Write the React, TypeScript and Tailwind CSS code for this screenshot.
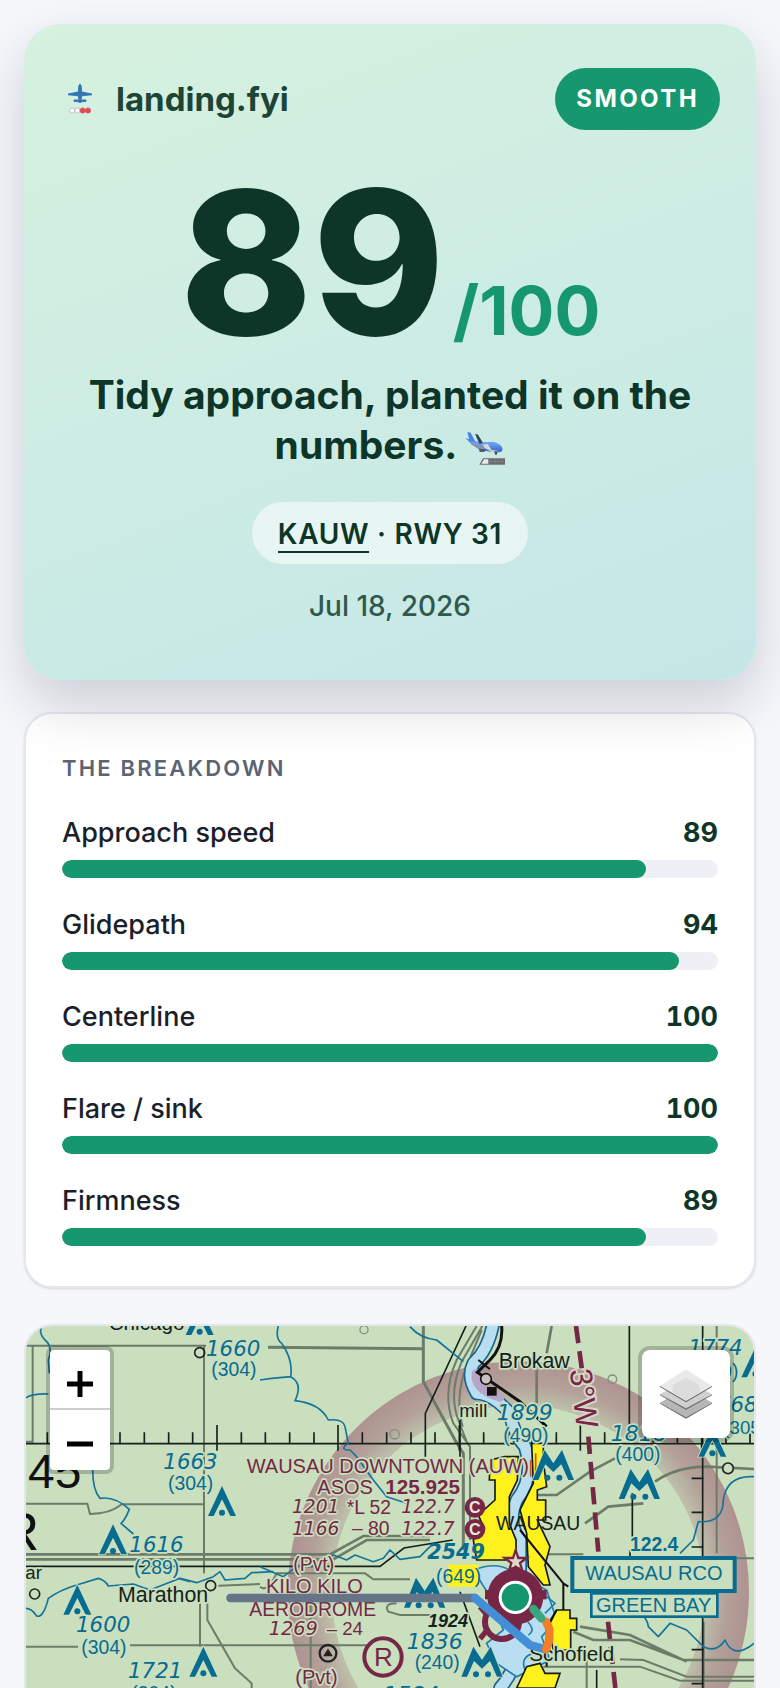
import React, { useState } from 'react';

interface Metric {
  label: string;
  score: number;
}

const metrics: Metric[] = [
  { label: 'Approach speed', score: 89 },
  { label: 'Glidepath', score: 94 },
  { label: 'Centerline', score: 100 },
  { label: 'Flare / sink', score: 100 },
  { label: 'Firmness', score: 89 },
];

const LogoMark: React.FC = () => (
  <svg viewBox="0 0 40 40" className="w-10 h-10 shrink-0" aria-hidden="true">
    <g fill="#3576b5">
      <path d="M18.200 7.500Q20 2 21.800 7.500L22 12.500L32 14.500V16.300L22 17.200L21.200 24H18.800L18 17.200L8 16.300V14.500L18 12.500Z" />
      <rect x="13.500" y="20.500" width="13" height="2.400" rx="1" />
    </g>
    <g strokeWidth="0.8">
      <circle cx="12.200" cy="31.500" r="2.600" fill="#fff" stroke="#aab3bb" />
      <circle cx="17.400" cy="31.500" r="2.600" fill="#fff" stroke="#aab3bb" />
      <circle cx="22.700" cy="31.500" r="2.600" fill="#e5484d" stroke="#d2565c" />
      <circle cx="28" cy="31.500" r="2.600" fill="#e5484d" stroke="#d2565c" />
    </g>
  </svg>
);

const ArrivalPlane: React.FC = () => (
  <svg viewBox="0 0 120 102" className="inline-block w-10 h-[34px] align-[-7px]" role="img" aria-label="airplane arrival">
    <defs>
      <linearGradient id="fuselage" x1="0" y1="0" x2="0" y2="1">
        <stop offset="0" stopColor="#4a82ea" />
        <stop offset="0.400" stopColor="#6da0f5" />
        <stop offset="1" stopColor="#2f5fc4" />
      </linearGradient>
    </defs>
    <path d="M1 18L20 24L44 31L84 30Q107 34 112 48Q115 58 103 61L80 60L44 53L18 36Z" fill="url(#fuselage)" />
    <path d="M7 0L17 2L30 27L14 28Z" fill="#4a82ea" />
    <path d="M30 5L39 8L54 33L43 35Z" fill="#354250" />
    <path d="M18 31L42 40L62 46L54 53L38 49L18 37Z" fill="#8298ad" />
    <path d="M52 38L68 36L80 54L62 50Z" fill="#d3dcd6" />
    <path d="M64 50L84 54L102 57L96 61L78 60Z" fill="#c3cfd3" />
    <path d="M42 50L60 52L60 59L44 60Z" fill="#53565f" />
    <path d="M88 58H99L95 68H90Z" fill="#4b5158" />
    <path d="M54 79H120V98H43Z" fill="#6c6c70" />
    <path d="M57 82H70V95H49Z" fill="#e8eaea" />
    <path d="M75 88H116" stroke="#929295" strokeWidth="3" strokeDasharray="7 4" />
  </svg>
);

const LayersIcon: React.FC = () => (
  <svg viewBox="0 0 156 150" className="w-[52px] h-[50px]" aria-hidden="true">
    <path d="M0 101L78 55L156 101L78 149Z" fill="#b6b6b6" />
    <path d="M0 101L78 145L156 101V104L78 149L0 104Z" fill="#777" />
    <path d="M0 76L78 30L156 76L78 122Z" fill="#d0d0d0" />
    <path d="M0 76L78 118L156 76V79L78 123L0 79Z" fill="#777" />
    <path d="M0 51L78 1L156 51L78 99Z" fill="#e9e9e9" />
    <path d="M38 49L78 26L119 49L119 69L78 93L38 69Z" fill="#dcdcdc" />
    <path d="M0 51L78 96L156 51V54L78 100L0 54Z" fill="#666" />
  </svg>
);

const BLUE = '#086b90';
const MAGENTA = '#772746';

interface LabelProps {
  x: number;
  y: number;
  size: number;
  fill: string;
  italic?: boolean;
  bold?: boolean;
  children: string;
}

// Elevations and frequencies are set in the wider oblique face
const Label: React.FC<LabelProps> = ({ x, y, size, fill, italic, bold, children }) => (
  <text
    x={x}
    y={y}
    fontSize={size}
    fill={fill}
    fontFamily={italic && !bold ? '"DejaVu Sans", sans-serif' : undefined}
    fontStyle={italic ? 'italic' : 'normal'}
    fontWeight={bold ? 700 : 400}
    stroke="#c9dfbe"
    strokeWidth="10"
    strokeLinejoin="round"
    paintOrder="stroke"
  >
    {children}
  </text>
);

// Obstruction symbol, (x, y) is the tip
const Tower: React.FC<{ x: number; y: number }> = ({ x, y }) => (
  <g transform={`translate(${x} ${y})`}>
    <path d="M0 0L-42 90H-25L0 40L25 90H42Z" fill={BLUE} stroke="#c9dfbe" strokeWidth="5" paintOrder="stroke" />
    <circle cx="0" cy="80" r="9" fill={BLUE} />
  </g>
);

const TowerGroup: React.FC<{ x: number; y: number }> = ({ x, y }) => (
  <g transform={`translate(${x} ${y})`}>
    <path d="M-26 0L-62 90H-45L-24 43L0 66L24 43L45 90H62L26 0L0 40Z" fill={BLUE} stroke="#c9dfbe" strokeWidth="5" paintOrder="stroke" />
    <circle cx="-18" cy="83" r="9" fill={BLUE} />
    <circle cx="18" cy="83" r="9" fill={BLUE} />
  </g>
);

const ticks = Array.from({ length: 30 }, (_, i) => 142 + Math.round(i * 72.7));

const SectionalChart: React.FC = () => (
  <svg
    viewBox="78 48 2184 1086"
    preserveAspectRatio="xMidYMin slice"
    className="absolute inset-0 w-full h-full"
    fontFamily='"Liberation Sans", Arial, sans-serif'
    role="img"
    aria-label="Sectional chart around Wausau Downtown"
  >
    <defs>
      <radialGradient id="airspace" gradientUnits="userSpaceOnUse" cx="1555" cy="846" r="692">
        <stop offset="0.820" stopColor="#98526a" stopOpacity="0.240" />
        <stop offset="0.900" stopColor="#98526a" stopOpacity="0.440" />
        <stop offset="1" stopColor="#98526a" stopOpacity="0.540" />
      </radialGradient>
    </defs>
    <rect x="0" y="0" width="2400" height="1400" fill="#c9dfbe" />
    <circle cx="1555" cy="846" r="626" fill="none" stroke="url(#airspace)" strokeWidth="132" />

    {/* roads */}
    <g fill="none" stroke="#6c7c69" strokeWidth="6">
      <path d="M78 107H618M98 107V395H78M612 107V730L612 790M78 581H262L270 612Q330 612 365 583H612" />
      <path d="M78 733H990L1090 678H1290M78 748H1000L1100 690H1290" strokeWidth="8" />
      <path d="M78 1010H234M390 1006H1195M600 880V1010M622 880V930L705 1075L755 1120V1134M655 827L780 822" />
      <path d="M804 112L1270 116M1270 48V215L1365 390L1390 430V720" strokeWidth="9" />
      <path d="M1430 48L1370 150Q1325 250 1360 340L1410 410V690M1447 48L1385 155Q1345 250 1375 330L1402 400" />
      <path d="M1445 60L1395 180Q1365 270 1388 350" />
      <path d="M780 830Q800 850 830 790H1095L1120 808H1230M932 880V1134M1190 880Q1150 880 1165 905L1200 915H1300" />
      <path d="M1655 48L1640 130M1610 180V280M1612 555H1670L1770 485L1845 445M1755 640L1825 590L1930 580M1965 515Q2030 470 2120 470L2262 477" strokeWidth="8" />
      <path d="M2150 48V730M1630 733H1750M2210 745H2262M1860 1048L1930 1050L2060 1100H2262M1630 1070H1920L2040 1112H2262M1760 1048V1134" />
      <path d="M1720 965L1780 990H1890L2050 1050H2262M1740 950L1890 975L2060 1055" strokeWidth="8" />
      <path d="M2110 935V1134" strokeWidth="8" />
    </g>

    {/* rail lines and graticule */}
    <g fill="none" stroke="#17201c" strokeWidth="5">
      <path d="M78 401H2262M78 769H1140L1212 714L1358 690M1398 48L1276 310V440M1380 330V440M1888 48V400M2108 48V1134" />
      <path d="M1897 550V680M1380 845L1440 1010M1890 720V820M1790 1080V1134" />
      <path d="M2075 505H2110M2075 607H2110M2075 711H2110M2075 1019H2110M2075 1121H2110" />
      {ticks.map((x, i) => (
        <path key={x} d={i % 5 === 2 ? `M${x} 345V422` : `M${x} 367V401`} />
      ))}
    </g>

    {/* streams */}
    <g fill="none" stroke="#15749a" strokeWidth="5" strokeLinejoin="round">
      <path d="M125 48Q115 70 135 90Q160 110 145 150L148 190M78 263Q100 250 145 252M278 480Q278 540 300 565Q345 558 388 598Q375 630 363 640L400 672" />
      <path d="M78 895Q95 895 110 918Q130 925 145 865Q180 840 230 825L295 805Q315 810 325 828L400 822L450 840L540 805L590 818L640 800L660 785L675 810L735 805L755 788L820 785" />
      <path d="M835 48Q825 85 845 100Q880 150 872 200L815 205L780 210M872 200Q910 220 885 272Q960 280 985 330Q1030 325 1035 350L1045 400Q1015 420 1050 420L1070 440L1120 510L1160 560L1220 580" />
      <path d="M980 745L1000 735L1040 750L1065 735L1120 755L1150 745L1170 720L1200 748L1260 740L1290 710M780 770L850 800L890 770L960 768" />
      <path d="M2262 500Q2180 495 2170 570Q2170 640 2095 635L2080 690L2040 730M1900 915Q1940 910 1945 950L1975 980L2010 940L2060 960L2110 1010Q2150 1030 2175 990Q2200 1050 2262 1000" />
      <path d="M1230 50Q1260 85 1310 90L1390 155M535 805L570 815" />
    </g>

    {/* river and lakes */}
    <g fill="none" strokeLinejoin="round" strokeLinecap="round">
      <path d="M1483 20Q1470 115 1420 160Q1400 200 1430 250Q1475 250 1530 310Q1540 370 1575 410Q1605 500 1550 570Q1520 640 1560 690V780L1545 900Q1580 970 1540 1020Q1550 1080 1500 1134" stroke="#16638b" strokeWidth="42" />
      <path d="M1483 20Q1470 115 1420 160Q1400 200 1430 250Q1475 250 1530 310Q1540 370 1575 410Q1605 500 1550 570Q1520 640 1560 690V780L1545 900Q1580 970 1540 1020Q1550 1080 1500 1134" stroke="#b9ddf1" strokeWidth="32" />
      <path d="M1428 190Q1422 240 1500 262" stroke="#b5a5c7" strokeWidth="26" />
    </g>
    <path d="M1420 780Q1500 750 1540 790L1640 840L1670 930L1625 980L1650 1050L1550 1100L1490 1060L1460 1000L1510 960L1470 860Z" fill="#b9ddf1" stroke="#207da5" strokeWidth="5" />
    <path d="M1578 930Q1610 960 1585 975M1640 860L1665 880L1635 910M1600 1030Q1560 1040 1575 1080" fill="none" stroke="#207da5" strokeWidth="5" />

    {/* built-up areas */}
    <g fill="#fff21c" stroke="#161b16" strokeWidth="5">
      <path d="M1470 450L1515 440H1555L1552 510L1528 560V640L1548 690V750H1430L1420 690L1450 650L1435 615L1485 570V510H1468Z" />
      <path d="M1595 400H1630V455L1640 530L1612 540V570H1637V630H1612L1650 710L1635 765L1650 825H1630L1585 770L1580 670L1560 600L1600 520Z" />
      <path d="M1670 900H1710V925H1730V960H1712V1020H1660L1645 950Z" />
      <path d="M1550 1134L1580 1070L1620 1060L1635 1090H1680L1665 1134Z" />
    </g>
    <path d="M1607 430V510M1592 450V500" stroke="#d34c34" strokeWidth="5" />
    <g fill="none" stroke="#111" strokeWidth="9">
      <path d="M1505 48Q1510 110 1470 150L1432 187L1560 275L1640 350" />
      <path d="M1560 660L1690 820V900M1670 900L1640 950V1070M1690 820L1705 830M1435 150L1470 178" strokeWidth="6" />
    </g>
    <circle cx="1458" cy="207" r="16" fill="#c9c2bf" stroke="#111" strokeWidth="5" />
    <rect x="1461" y="231" width="29" height="26" fill="#111" />

    {/* isogonic line */}
    <path d="M1728 48L1746 180M1765 380L1795 725M1824 935L1846 1134" stroke={MAGENTA} strokeWidth="14" strokeDasharray="52 24" fill="none" />
    <text x="0" y="0" fontSize="94" fill={MAGENTA} stroke="#d6d6c8" strokeWidth="12" paintOrder="stroke" transform="translate(1709 180) rotate(83)">3°W</text>

    <g fill="none" stroke="#222" strokeWidth="5">
      <circle cx="599" cy="128" r="15" />
      <circle cx="632" cy="827" r="15" fill="#c9dfbe" />
      <circle cx="104" cy="852" r="15" />
      <circle cx="2184" cy="475" r="16" fill="#c9dfbe" />
      <circle cx="984" cy="1030" r="25" strokeWidth="7" />
      <path d="M974 1036L984 1020L994 1036Z" fill="#222" />
    </g>
    <g fill="none" stroke="#858e7e" strokeWidth="4">
      <circle cx="1092" cy="59" r="12" />
      <circle cx="1184" cy="373" r="14" />
      <circle cx="1837" cy="208" r="13" />
    </g>

    <Tower x={599} y={-15} />
    <Tower x={666} y={528} />
    <Tower x={339} y={643} />
    <Tower x={232} y={824} />
    <Tower x={610} y={1010} />
    <Tower x={2137} y={350} />
    <Tower x={2266} y={112} />
    <TowerGroup x={1660} y={420} />
    <TowerGroup x={1918} y={477} />
    <TowerGroup x={1274} y={803} />
    <TowerGroup x={1446} y={1010} />

    <g>
      <Label x={326} y={61} size={62} fill="#15211c">Chicago</Label>
      <Label x={618} y={138} size={64} fill={BLUE} italic>1660</Label>
      <Label x={634} y={198} size={58} fill={BLUE}>(304)</Label>
      <Label x={490} y={478} size={64} fill={BLUE} italic>1663</Label>
      <Label x={504} y={540} size={58} fill={BLUE}>(304)</Label>
      <Label x={388} y={725} size={64} fill={BLUE} italic>1616</Label>
      <Label x={402} y={791} size={58} fill={BLUE}>(289)</Label>
      <Label x={228} y={965} size={64} fill={BLUE} italic>1600</Label>
      <Label x={244} y={1031} size={58} fill={BLUE}>(304)</Label>
      <Label x={384} y={1105} size={64} fill={BLUE} italic>1721</Label>
      <Label x={394} y={1170} size={58} fill={BLUE}>(304)</Label>
      <text x="84" y="535" fontSize="144" fill="#111">45</text>
      <text x="2" y="720" fontSize="160" fill="#111">R</text>
      <Label x={76} y={808} size={56} fill="#15211c">ar</Label>
      <Label x={354} y={876} size={64} fill="#15211c">Marathon</Label>

      <Label x={740} y={490} size={60} fill={MAGENTA}>WAUSAU DOWNTOWN (AUW)</Label>
      <Label x={952} y={553} size={60} fill={MAGENTA}>ASOS</Label>
      <Label x={1156} y={553} size={62} fill={MAGENTA} bold>125.925</Label>
      <Label x={876} y={610} size={56} fill={MAGENTA} italic>1201</Label>
      <Label x={1040} y={612} size={58} fill={MAGENTA}>*L 52</Label>
      <Label x={1204} y={610} size={56} fill={MAGENTA} italic>122.7</Label>
      <Label x={876} y={676} size={56} fill={MAGENTA} italic>1166</Label>
      <Label x={1056} y={676} size={58} fill={MAGENTA}>– 80</Label>
      <Label x={1204} y={676} size={56} fill={MAGENTA} italic>122.7</Label>
      <Label x={880} y={782} size={58} fill={MAGENTA}>(Pvt)</Label>
      <Label x={798} y={850} size={60} fill={MAGENTA}>KILO KILO</Label>
      <Label x={748} y={917} size={58} fill={MAGENTA}>AERODROME</Label>
      <Label x={806} y={974} size={58} fill={MAGENTA} italic>1269</Label>
      <Label x={980} y={974} size={56} fill={MAGENTA}>– 24</Label>
      <Label x={886} y={1122} size={60} fill={MAGENTA}>(Pvt)</Label>
      <Label x={1378} y={322} size={56} fill="#15211c">mill</Label>
      <Label x={1496} y={174} size={64} fill="#15211c">Brokaw</Label>
      <Label x={1490} y={331} size={66} fill={BLUE} italic>1899</Label>
      <Label x={1510} y={396} size={58} fill={BLUE}>(490)</Label>
      <text x="1282" y="748" fontSize="62" fontFamily='"DejaVu Sans", sans-serif' fontStyle="italic" fontWeight="700" fill={BLUE}>2549</text>
      <rect x="1345" y="764" width="90" height="66" fill="#fff21c" />
      <text x="1308" y="818" fontSize="58" fill={BLUE}>(649)</text>
      <Label x={1284} y={952} size={54} fill="#15211c" italic bold>1924</Label>
      <Label x={1220} y={1016} size={66} fill={BLUE} italic>1836</Label>
      <Label x={1244} y={1078} size={58} fill={BLUE}>(240)</Label>
      <Label x={1150} y={1176} size={66} fill={BLUE} italic>1584</Label>

      <text x="1488" y="661" fontSize="58" fill="#15211c">WAUSAU</text>
      <Label x={2065} y={136} size={64} fill={BLUE} italic>1774</Label>
      <Label x={2080} y={204} size={58} fill={BLUE}>(319)</Label>
      <Label x={2110} y={306} size={64} fill={BLUE} italic>1768</Label>
      <Label x={2170} y={372} size={56} fill={BLUE}>(305)</Label>
      <Label x={1832} y={394} size={66} fill={BLUE} italic>1818</Label>
      <Label x={1846} y={454} size={58} fill={BLUE}>(400)</Label>
      <Label x={1890} y={724} size={58} fill={BLUE} bold>122.4</Label>
      <Label x={1588} y={1054} size={62} fill="#15211c">Schofield</Label>
    </g>

    <circle cx="1149" cy="1041" r="56" fill="#c9dfbe" stroke={MAGENTA} strokeWidth="12" />
    <text x="1122" y="1069" fontSize="78" fill={MAGENTA}>R</text>
    <g fontSize="48" fontWeight="700" fill="#e8e7d7">
      <circle cx="1425" cy="592" r="31" fill={MAGENTA} />
      <text x="1407" y="609">C</text>
      <circle cx="1425" cy="658" r="31" fill={MAGENTA} />
      <text x="1407" y="675">C</text>
    </g>

    <g fill="#c9dfbe" stroke={BLUE} strokeWidth="12">
      <rect x="1774" y="850" width="378" height="70" strokeWidth="8" />
      <rect x="1717" y="744" width="487" height="99" />
    </g>
    <g fontSize="60" fill={BLUE}>
      <text x="1756" y="809">WAUSAU</text>
      <text x="2034" y="809">RCO</text>
      <text x="1788" y="905">GREEN BAY</text>
    </g>

    {/* airport symbols */}
    <path d="M1547 720L1555 744H1580L1560 759L1568 785L1547 770L1526 785L1534 759L1514 744H1539Z" fill="#e2d6cb" stroke={MAGENTA} strokeWidth="7" />
    <g fill={MAGENTA}>
      <rect x="1455" y="840" width="185" height="28" />
      <rect x="1530" y="772" width="30" height="180" />
      <circle cx="1546" cy="860" r="84" />
    </g>
    <circle cx="1506" cy="936" r="51" fill="none" stroke={MAGENTA} strokeWidth="18" />
    <path d="M1440 986L1466 955M1440 890L1466 920" stroke={MAGENTA} strokeWidth="16" />

    {/* flown track */}
    <g fill="none" strokeWidth="25" strokeLinecap="round" strokeLinejoin="round">
      <path d="M691 864H1425" stroke="#667487" />
      <path d="M1425 864L1590 1005L1635 1018" stroke="#438fd7" />
      <path d="M1638 1018L1648 990V956L1638 935" stroke="#ef7f29" />
      <path d="M1624 925L1600 897" stroke="#3aa680" />
    </g>
    <circle cx="1546" cy="862" r="50" fill="#fff" />
    <circle cx="1546" cy="862" r="41" fill="#15966d" />
  </svg>
);

const ScoreBar: React.FC<Metric> = ({ label, score }) => (
  <div>
    <div className="flex justify-between items-baseline leading-9 mb-[9px]">
      <span className="text-[27px] font-medium text-[#1b1f2a]">{label}</span>
      <span className="text-[27px] font-bold tabular-nums text-[#0d3528]">{score}</span>
    </div>
    <div className="h-[18px] rounded-full bg-[#eef0f6] overflow-hidden">
      <div className="h-full rounded-full bg-[#16976e]" style={{ width: `${score}%` }} />
    </div>
  </div>
);

const App: React.FC = () => {
  const [zoom, setZoom] = useState(10);

  return (
    <main className="min-h-screen flex flex-col bg-[#f5f7fb] px-6 pt-6 font-['Inter',sans-serif]">
      <section className="relative z-10 rounded-[36px] bg-linear-160 from-[#d6f1de] via-[#cdece4] to-[#c4e7e6] px-9 pt-11 pb-14 text-center text-[#0d3528] shadow-[0_24px_56px_rgba(20,24,48,0.18)]">
        <header className="flex items-center justify-between">
          <div className="flex items-center gap-4">
            <LogoMark />
            <span className="text-[33px] leading-10 font-bold text-[#1c4536]">landing.fyi</span>
          </div>
          <span className="rounded-full bg-[#16976e] px-[21px] py-4 text-2xl leading-[30px] font-bold tracking-widest text-white">SMOOTH</span>
        </header>

        <div className="mt-8 flex items-baseline justify-center gap-2 leading-none">
          <span className="text-[200px] font-extrabold">89</span>
          <span className="text-[68px] font-bold text-[#16976e]">/100</span>
        </div>

        <h1 className="mt-2 text-[39px] leading-[50px] font-bold">
          Tidy approach, planted it on the numbers. <ArrivalPlane />
        </h1>

        <div className="mt-8 flex justify-center">
          <p className="rounded-full bg-white/55 px-[26px] pt-3.5 pb-3 text-[28px] leading-9 font-semibold tracking-wide">
            <a href="#kauw" className="border-b-2 border-[#0d3528]">KAUW</a> · RWY 31
          </p>
        </div>
        <p className="mt-6 text-[28px] leading-9 font-medium text-[#30584b]">Jul 18, 2026</p>
      </section>

      <section className="mt-8 rounded-[28px] border-2 border-[#e5e7ee] bg-white px-9 pt-[38px] pb-10 shadow-sm">
        <h2 className="text-[22px] leading-8 font-semibold tracking-widest text-[#5c6474]">THE BREAKDOWN</h2>
        <div className="mt-[31px] flex flex-col gap-[29px]">
          {metrics.map((m) => (
            <ScoreBar key={m.label} {...m} />
          ))}
        </div>
      </section>

      <section className="relative mt-9 flex-1 min-h-[360px] rounded-t-[28px] border-2 border-b-0 border-[#e5e7ee] overflow-hidden">
        <SectionalChart />
        <div className="absolute left-5 top-5 flex flex-col rounded-lg border-4 border-black/20 bg-clip-padding bg-white">
          <button
            type="button"
            aria-label="Zoom in"
            disabled={zoom >= 18}
            onClick={() => setZoom(zoom + 1)}
            className="flex items-center justify-center w-[60px] h-[60px] border-b-2 border-[#ccc] text-black"
          >
            <svg viewBox="0 0 26 26" className="w-[26px] h-[26px] mt-2.5" aria-hidden="true">
              <path d="M13 0V26M0 13H26" stroke="currentColor" strokeWidth="5" />
            </svg>
          </button>
          <button
            type="button"
            aria-label="Zoom out"
            disabled={zoom <= 1}
            onClick={() => setZoom(zoom - 1)}
            className="flex items-center justify-center w-[60px] h-[60px] text-black"
          >
            <svg viewBox="0 0 26 26" className="w-[26px] h-[26px] mt-2" aria-hidden="true">
              <path d="M0 13H26" stroke="currentColor" strokeWidth="5" />
            </svg>
          </button>
        </div>
        <button
          type="button"
          aria-label="Layers"
          className="absolute right-5 top-5 flex items-center justify-center w-24 h-24 rounded-xl border-4 border-black/20 bg-clip-padding bg-white"
        >
          <LayersIcon />
        </button>
      </section>
    </main>
  );
};

export default App;
